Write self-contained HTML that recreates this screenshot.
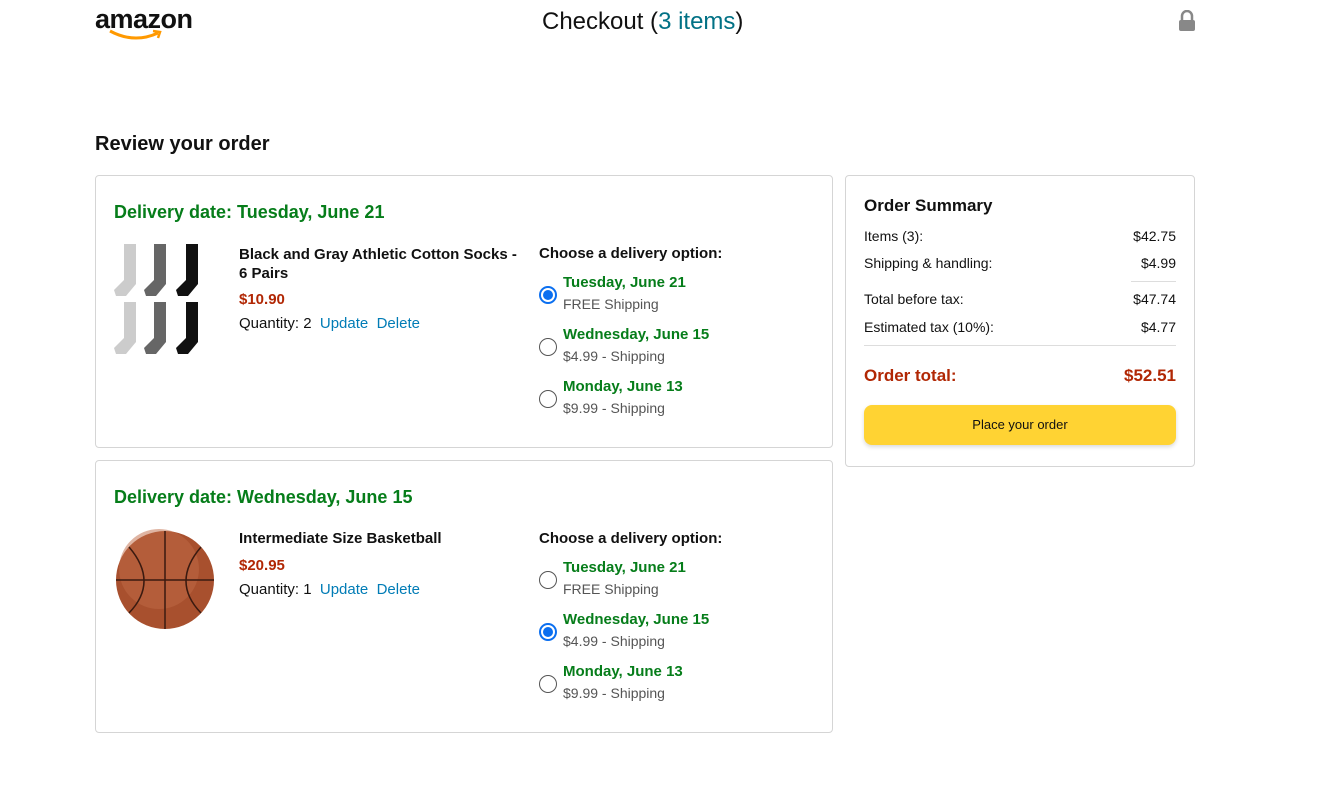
<!DOCTYPE html>
<html><head><meta charset="utf-8"><style>
body{margin:0;width:1320px;height:793px;background:#fff;font-family:"Liberation Sans",Arial,sans-serif;color:#111;position:relative;overflow:hidden}
.a{position:absolute;white-space:nowrap}
.card{position:absolute;border:1px solid #d5d5d5;border-radius:4px;box-sizing:border-box}
.g{color:#067d1a;font-weight:bold}
.gray{color:#555;font-size:14px}
.red{color:#b12704;font-weight:bold}
.link{color:#017cb6}
.radio{position:absolute;width:18px;height:18px;border:1px solid #555;border-radius:50%;box-sizing:border-box;background:#fff}
.radio.on{border:2px solid #0b6ff0}
.radio.on::after{content:"";position:absolute;left:2px;top:2px;width:10px;height:10px;border-radius:50%;background:#0b6ff0}
.row{position:absolute;left:18px;right:18px;font-size:14px;display:flex;justify-content:space-between}
</style></head><body>
<div class="a" style="left:95px;top:4px;font-size:27px;font-weight:bold;letter-spacing:-0.5px;color:#111">amazon</div>
<svg class="a" style="left:108px;top:28px" width="56" height="14" viewBox="0 0 56 14"><path d="M2 3 Q26 16 50 5" stroke="#f90" stroke-width="3" fill="none"/><path d="M45 3 L52 4 L50 10" stroke="#f90" stroke-width="2.5" fill="none"/></svg>
<div class="a" style="left:542px;top:8px;font-size:24px">Checkout (<span style="color:#017185">3 items</span>)</div>
<svg class="a" style="left:1178px;top:10px" width="18" height="22" viewBox="0 0 18 22"><path d="M4 10 V6 a5 5 0 0 1 10 0 V10" stroke="#888" stroke-width="2.5" fill="none"/><rect x="1" y="10" width="16" height="11" rx="2" fill="#888"/></svg>
<div class="a" style="left:95px;top:133px;font-size:20px;font-weight:bold">Review your order</div>

<div class="card" style="left:95px;top:175px;width:738px;height:273px">
<div class="a g" style="left:18px;top:26px;font-size:18px">Delivery date: Tuesday, June 21</div>
<svg class="a" style="left:16px;top:66px" width="104" height="114" viewBox="0 0 104 114">
<g id="s"><path d="M12 2h12v40l-10 12h-10l-2-6 10-10z" fill="#ccc"/><path d="M42 2h12v40l-10 12h-10l-2-6 10-10z" fill="#666"/><path d="M74 2h12v40l-10 12h-10l-2-6 10-10z" fill="#111"/></g>
<use href="#s" y="58"/></svg>
<div class="a" style="left:143px;top:69px;font-size:15px;font-weight:bold;line-height:19px;white-space:normal;width:280px">Black and Gray Athletic Cotton Socks - 6 Pairs</div>
<div class="a red" style="left:143px;top:115px;font-size:15px">$10.90</div>
<div class="a" style="left:143px;top:139px;font-size:15px">Quantity: 2 <span class="link">&nbsp;Update&nbsp; Delete</span></div>
<div class="a" style="left:443px;top:69px;font-size:15px;font-weight:bold">Choose a delivery option:</div>
<div class="radio on" style="left:443px;top:110px"></div>
<div class="a g" style="left:467px;top:98px;font-size:15px">Tuesday, June 21</div><div class="a gray" style="left:467px;top:120px">FREE Shipping</div>
<div class="radio" style="left:443px;top:162px"></div>
<div class="a g" style="left:467px;top:150px;font-size:15px">Wednesday, June 15</div><div class="a gray" style="left:467px;top:172px">$4.99 - Shipping</div>
<div class="radio" style="left:443px;top:214px"></div>
<div class="a g" style="left:467px;top:202px;font-size:15px">Monday, June 13</div><div class="a gray" style="left:467px;top:224px">$9.99 - Shipping</div>
</div>

<div class="card" style="left:95px;top:460px;width:738px;height:273px">
<div class="a g" style="left:18px;top:26px;font-size:18px">Delivery date: Wednesday, June 15</div>
<svg class="a" style="left:18px;top:68px" width="102" height="102" viewBox="0 0 102 102"><circle cx="51" cy="51" r="49" fill="#a8502e"/><circle cx="45" cy="40" r="40" fill="#c06a45" opacity=".5"/><path d="M2 51h98M51 2v98M15 18q30 35 0 66M87 18q-30 35 0 66" stroke="#3a1a10" stroke-width="1.5" fill="none"/></svg>
<div class="a" style="left:143px;top:69px;font-size:15px;font-weight:bold">Intermediate Size Basketball</div>
<div class="a red" style="left:143px;top:96px;font-size:15px">$20.95</div>
<div class="a" style="left:143px;top:120px;font-size:15px">Quantity: 1 <span class="link">&nbsp;Update&nbsp; Delete</span></div>
<div class="a" style="left:443px;top:69px;font-size:15px;font-weight:bold">Choose a delivery option:</div>
<div class="radio" style="left:443px;top:110px"></div>
<div class="a g" style="left:467px;top:98px;font-size:15px">Tuesday, June 21</div><div class="a gray" style="left:467px;top:120px">FREE Shipping</div>
<div class="radio on" style="left:443px;top:162px"></div>
<div class="a g" style="left:467px;top:150px;font-size:15px">Wednesday, June 15</div><div class="a gray" style="left:467px;top:172px">$4.99 - Shipping</div>
<div class="radio" style="left:443px;top:214px"></div>
<div class="a g" style="left:467px;top:202px;font-size:15px">Monday, June 13</div><div class="a gray" style="left:467px;top:224px">$9.99 - Shipping</div>
</div>

<div class="card" style="left:845px;top:175px;width:350px;height:292px">
<div class="a" style="left:18px;top:20px;font-size:17px;font-weight:bold">Order Summary</div>
<div class="row" style="top:52px"><span>Items (3):</span><span>$42.75</span></div>
<div class="row" style="top:79px"><span>Shipping &amp; handling:</span><span>$4.99</span></div>
<div style="position:absolute;left:285px;right:18px;top:105px;border-top:1px solid #ddd"></div>
<div class="row" style="top:115px"><span>Total before tax:</span><span>$47.74</span></div>
<div class="row" style="top:143px"><span>Estimated tax (10%):</span><span>$4.77</span></div>
<div style="position:absolute;left:18px;right:18px;top:169px;border-top:1px solid #ddd"></div>
<div class="row red" style="top:190px;font-size:17px"><span>Order total:</span><span>$52.51</span></div>
<div style="position:absolute;left:18px;right:18px;top:229px;height:40px;background:#ffd333;border-radius:8px;box-shadow:0 2px 4px rgba(0,0,0,.15);font-size:13px;text-align:center;line-height:40px">Place your order</div>
</div>
</body></html>
